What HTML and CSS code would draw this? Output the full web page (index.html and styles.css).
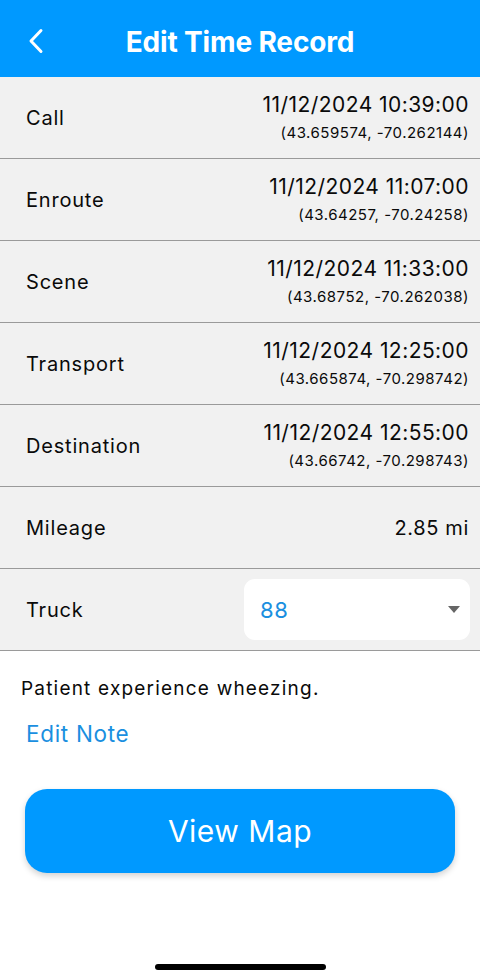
FILE: index.html
```html
<!DOCTYPE html>
<html>
<head>
<meta charset="utf-8">
<link rel="stylesheet" href="styles.css">
</head>
<body>
<div class="screen">
  <header class="topbar">
    <svg class="back" width="18" height="26" viewBox="0 0 18 26"><path d="M14 2.5 L4 13 L14 23.5" fill="none" stroke="#fff" stroke-width="3" stroke-linecap="round" stroke-linejoin="round"/></svg>
    <h1 class="title">Edit Time Record</h1>
  </header>
  <section class="rows">
    <div class="row"><span class="label">Call</span><div class="value"><div class="time">11/12/2024 10:39:00</div><div class="coord">(43.659574, -70.262144)</div></div></div>
    <div class="row"><span class="label">Enroute</span><div class="value"><div class="time">11/12/2024 11:07:00</div><div class="coord">(43.64257, -70.24258)</div></div></div>
    <div class="row"><span class="label">Scene</span><div class="value"><div class="time">11/12/2024 11:33:00</div><div class="coord">(43.68752, -70.262038)</div></div></div>
    <div class="row"><span class="label">Transport</span><div class="value"><div class="time">11/12/2024 12:25:00</div><div class="coord">(43.665874, -70.298742)</div></div></div>
    <div class="row"><span class="label">Destination</span><div class="value"><div class="time">11/12/2024 12:55:00</div><div class="coord">(43.66742, -70.298743)</div></div></div>
    <div class="row"><span class="label">Mileage</span><div class="value"><div class="miles">2.85 mi</div></div></div>
    <div class="row"><span class="label">Truck</span>
      <div class="select"><span class="sel-val">88</span><svg width="12" height="7" viewBox="0 0 12 7"><path d="M0 0 L12 0 L6 7 Z" fill="#666"/></svg></div>
    </div>
  </section>
  <p class="note">Patient experience wheezing.</p>
  <a class="edit-note">Edit Note</a>
  <button class="map-btn">View Map</button>
  <div class="spacer"></div>
  <div class="home"></div>
</div>
</body>
</html>
```
FILE: styles.css
```css
* { box-sizing: border-box; margin: 0; padding: 0; }
html, body { width: 480px; height: 975px; background: #fff; }
body { font-family: Inter, "Noto Sans", sans-serif; color: #0a0a0a; }
.screen { display: flex; flex-direction: column; height: 975px; }
.topbar { height: 77px; background: #0099ff; display: flex; align-items: center; justify-content: center; position: relative; }
.back { position: absolute; left: 27px; top: 28px; }
.title { color: #fff; font-size: 28px; font-weight: 700; letter-spacing: -0.15px; margin-top: 7px; }
.rows { background: #f1f1f1; }
.row { height: 82px; border-bottom: 1px solid #9a9a9a; display: flex; align-items: center; justify-content: space-between; padding: 0 11px 0 26px; }
.label { font-size: 20px; letter-spacing: 0.8px; }
.value { text-align: right; }
.time { font-size: 21px; letter-spacing: 0.45px; line-height: 29px; }
.coord { font-size: 15px; letter-spacing: 0.5px; line-height: 27px; }
.miles { font-size: 20px; letter-spacing: 0.65px; }
.select { width: 226px; height: 61px; background: #fff; border-radius: 11px; display: flex; align-items: center; justify-content: space-between; padding: 0 10px 0 16px; margin-right: -1px; }
.sel-val { color: #1a8fe0; font-size: 22px; letter-spacing: 0.6px; }
.note { font-size: 19px; letter-spacing: 1.2px; padding: 26px 0 0 21px; line-height: 24px; }
.edit-note { color: #1a8fe0; font-size: 22.5px; letter-spacing: 0.7px; padding: 19px 0 0 26px; line-height: 28px; display: block; }
.map-btn { margin: 41px 25px 0; height: 84px; border: none; border-radius: 22px; background: #0099ff; color: #fff; font-family: Inter, "Noto Sans", sans-serif; font-size: 30px; letter-spacing: 0.5px; box-shadow: 0 3px 6px rgba(0,0,0,0.18); }
.spacer { flex: 1; }
.home { width: 171px; height: 6px; background: #000; border-radius: 3px; align-self: center; margin-bottom: 5px; }
```
